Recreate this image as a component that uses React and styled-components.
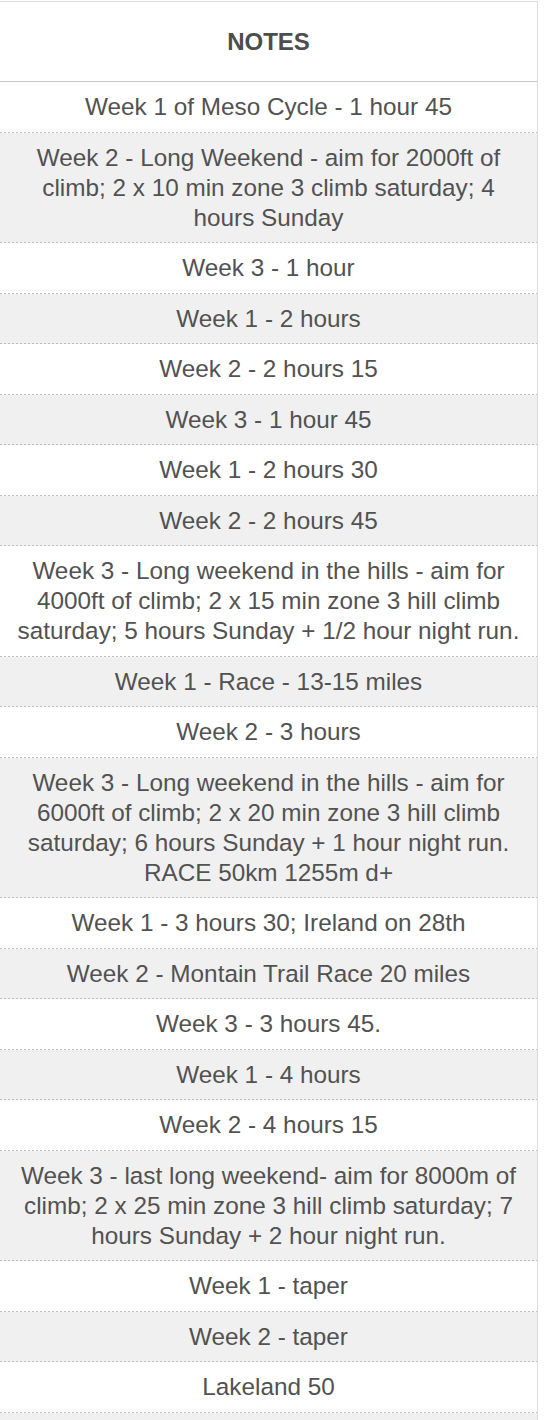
import React from "react";
import styled, { createGlobalStyle } from "styled-components";

const Global = createGlobalStyle`
  html, body { margin: 0; padding: 0; background: #fff; }
  body { font-family: "Liberation Sans", Arial, Helvetica, sans-serif; }
`;

const Page = styled.div`
  padding-top: 1px;
  width: 538px;
`;

const Table = styled.table`
  width: 538px;
  border-collapse: separate;
  border-spacing: 0;
  border-top: 1px solid #dcdcdc;
  border-right: 1px solid #dcdcdc;
  box-sizing: border-box;
  table-layout: fixed;
`;

const HeadCell = styled.th`
  padding: 25px 11px 24px;
  line-height: 30px;
  font-size: 24px;
  font-weight: 700;
  color: #4d4d4d;
  text-align: center;
  border-bottom: 1px solid #c8c8c8;
  background: #fff;
`;

const Cell = styled.td`
  padding: 10px 11px 10.5px;
  line-height: 30px;
  font-size: 24.3px;
  font-weight: 400;
  color: #525252;
  text-align: center;
  background-color: ${(p) => (p.$alt ? "#f0f0f0" : "#ffffff")};
  background-image: linear-gradient(to right, #bcbcbc 50%, transparent 50%);
  background-size: 4px 1px;
  background-repeat: repeat-x;
  background-position: left bottom;
`;

const notes = [
  "Week 1 of Meso Cycle - 1 hour 45",
  "Week 2 - Long Weekend - aim for 2000ft of climb; 2 x 10 min zone 3 climb saturday; 4 hours Sunday",
  "Week 3 - 1 hour",
  "Week 1 - 2 hours",
  "Week 2 - 2 hours 15",
  "Week 3 - 1 hour 45",
  "Week 1 - 2 hours 30",
  "Week 2 - 2 hours 45",
  "Week 3 - Long weekend in the hills - aim for 4000ft of climb; 2 x 15 min zone 3 hill climb saturday; 5 hours Sunday + 1/2 hour night run.",
  "Week 1 - Race - 13-15 miles",
  "Week 2 - 3 hours",
  "Week 3 - Long weekend in the hills - aim for 6000ft of climb; 2 x 20 min zone 3 hill climb saturday; 6 hours Sunday + 1 hour night run. RACE 50km 1255m d+",
  "Week 1 - 3 hours 30; Ireland on 28th",
  "Week 2 - Montain Trail Race 20 miles",
  "Week 3 - 3 hours 45.",
  "Week 1 - 4 hours",
  "Week 2 - 4 hours 15",
  "Week 3 - last long weekend- aim for 8000m of climb; 2 x 25 min zone 3 hill climb saturday; 7 hours Sunday + 2 hour night run.",
  "Week 1 - taper",
  "Week 2 - taper",
  "Lakeland 50",
  "",
];

export default function App() {
  return (
    <>
      <Global />
      <Page>
        <Table>
          <thead>
            <tr>
              <HeadCell>NOTES</HeadCell>
            </tr>
          </thead>
          <tbody>
            {notes.map((n, i) => (
              <tr key={i}>
                <Cell $alt={i % 2 === 1}>{n || "\u00a0"}</Cell>
              </tr>
            ))}
          </tbody>
        </Table>
      </Page>
    </>
  );
}
